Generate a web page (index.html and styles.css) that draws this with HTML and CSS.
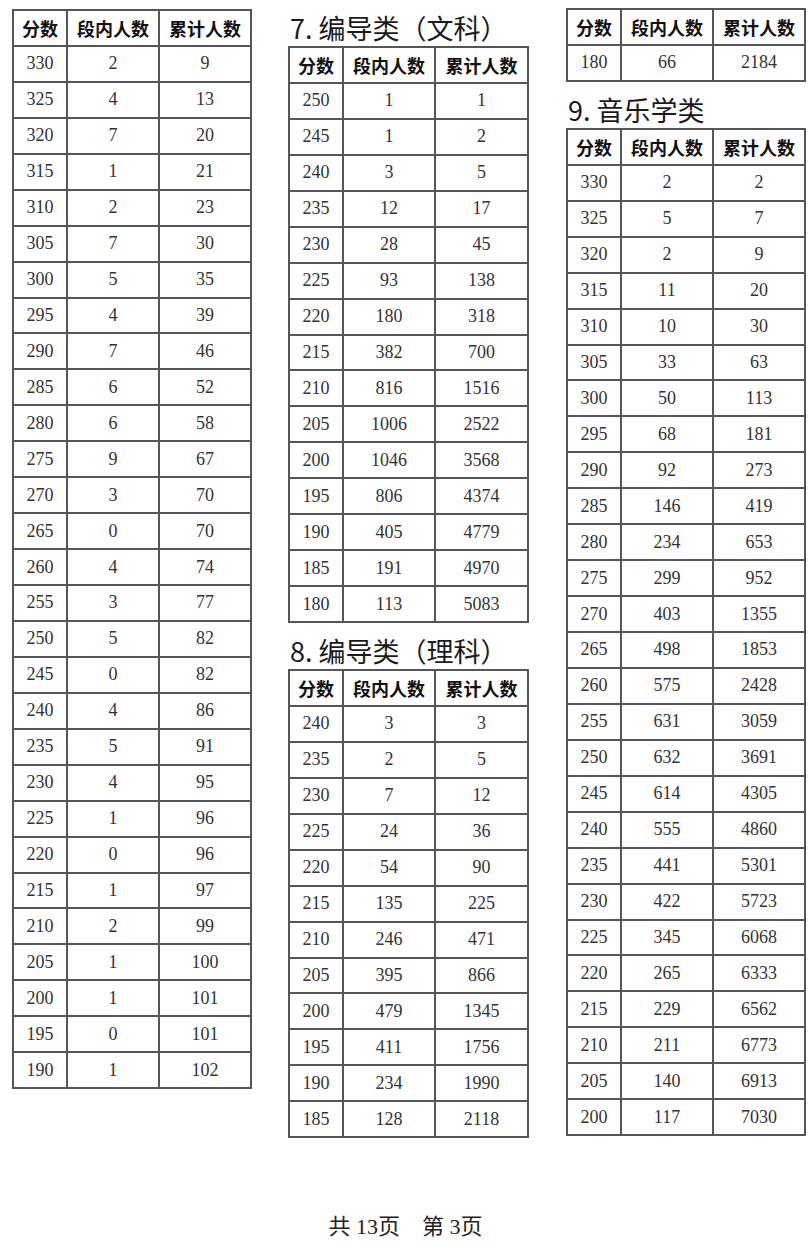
FILE: index.html
```html
<!DOCTYPE html>
<html lang="zh">
<head>
<meta charset="utf-8">
<link rel="stylesheet" href="styles.css">
</head>
<body>
<div class="page">
  <div class="col col1">
    <table class="t">
      <thead><tr><th>分数</th><th>段内人数</th><th>累计人数</th></tr></thead>
      <tbody id="t1"></tbody>
    </table>
  </div>
  <div class="col col2">
    <div class="title">7. 编导类（文科）</div>
    <table class="t">
      <thead><tr><th>分数</th><th>段内人数</th><th>累计人数</th></tr></thead>
      <tbody id="t2"></tbody>
    </table>
    <div class="title title-gap">8. 编导类（理科）</div>
    <table class="t">
      <thead><tr><th>分数</th><th>段内人数</th><th>累计人数</th></tr></thead>
      <tbody id="t3"></tbody>
    </table>
  </div>
  <div class="col col3">
    <table class="t">
      <thead><tr><th>分数</th><th>段内人数</th><th>累计人数</th></tr></thead>
      <tbody><tr><td>180</td><td>66</td><td>2184</td></tr></tbody>
    </table>
    <div class="title title-gap">9. 音乐学类</div>
    <table class="t">
      <thead><tr><th>分数</th><th>段内人数</th><th>累计人数</th></tr></thead>
      <tbody id="t4"></tbody>
    </table>
  </div>
</div>
<div class="footer"><span class="n">共 13页</span>　<span class="n">第 3页</span></div>
<script src="app.js"></script>
</body>
</html>
```
FILE: app.js
```js
const data = {
  t1: [[330,2,9],[325,4,13],[320,7,20],[315,1,21],[310,2,23],[305,7,30],[300,5,35],[295,4,39],[290,7,46],[285,6,52],[280,6,58],[275,9,67],[270,3,70],[265,0,70],[260,4,74],[255,3,77],[250,5,82],[245,0,82],[240,4,86],[235,5,91],[230,4,95],[225,1,96],[220,0,96],[215,1,97],[210,2,99],[205,1,100],[200,1,101],[195,0,101],[190,1,102]],
  t2: [[250,1,1],[245,1,2],[240,3,5],[235,12,17],[230,28,45],[225,93,138],[220,180,318],[215,382,700],[210,816,1516],[205,1006,2522],[200,1046,3568],[195,806,4374],[190,405,4779],[185,191,4970],[180,113,5083]],
  t3: [[240,3,3],[235,2,5],[230,7,12],[225,24,36],[220,54,90],[215,135,225],[210,246,471],[205,395,866],[200,479,1345],[195,411,1756],[190,234,1990],[185,128,2118]],
  t4: [[330,2,2],[325,5,7],[320,2,9],[315,11,20],[310,10,30],[305,33,63],[300,50,113],[295,68,181],[290,92,273],[285,146,419],[280,234,653],[275,299,952],[270,403,1355],[265,498,1853],[260,575,2428],[255,631,3059],[250,632,3691],[245,614,4305],[240,555,4860],[235,441,5301],[230,422,5723],[225,345,6068],[220,265,6333],[215,229,6562],[210,211,6773],[205,140,6913],[200,117,7030]]
};
for (const id in data) {
  const tb = document.getElementById(id);
  tb.innerHTML = data[id].map(r => '<tr><td>' + r.join('</td><td>') + '</td></tr>').join('');
}
```
FILE: styles.css
```css
html, body { margin: 0; padding: 0; background: #fff; }
body { width: 811px; height: 1246px; position: relative; overflow: hidden; }
.page { display: flex; align-items: flex-start; }
.col { display: flex; flex-direction: column; }
.col1 { margin-left: 12px; margin-top: 9px; width: 240px; }
.col2 { margin-left: 36px; margin-top: 9px; width: 241px; }
.col3 { margin-left: 37px; margin-top: 8px; width: 240px; }
.title {
  height: 37px; line-height: 37px;
  font-family: "Noto Sans CJK SC", "Noto Sans", sans-serif;
  font-size: 27px; color: #1a1a1a; padding-left: 2px;
  white-space: nowrap;
}
.title-gap { margin-top: 9px; }
.t { border-collapse: collapse; width: 100%; table-layout: fixed; }
.t th, .t td {
  border: 2px solid #555;
  height: 35.95px; padding: 0; text-align: center;
  box-sizing: border-box;
}
.t th:nth-child(1), .t td:nth-child(1) { width: 54px; }
.t th:nth-child(2), .t td:nth-child(2) { width: 92px; }
.t th {
  font-family: "Noto Sans CJK SC", sans-serif; font-weight: bold;
  font-size: 18px; color: #111;
}
.t td {
  font-family: "Liberation Serif", serif; font-size: 18px; color: #333;
}
.footer {
  position: absolute; left: 0; right: 0; top: 1208px; text-align: center;
  font-family: "Liberation Serif", "Noto Sans CJK SC", serif; font-size: 22px; color: #222;
}
```
